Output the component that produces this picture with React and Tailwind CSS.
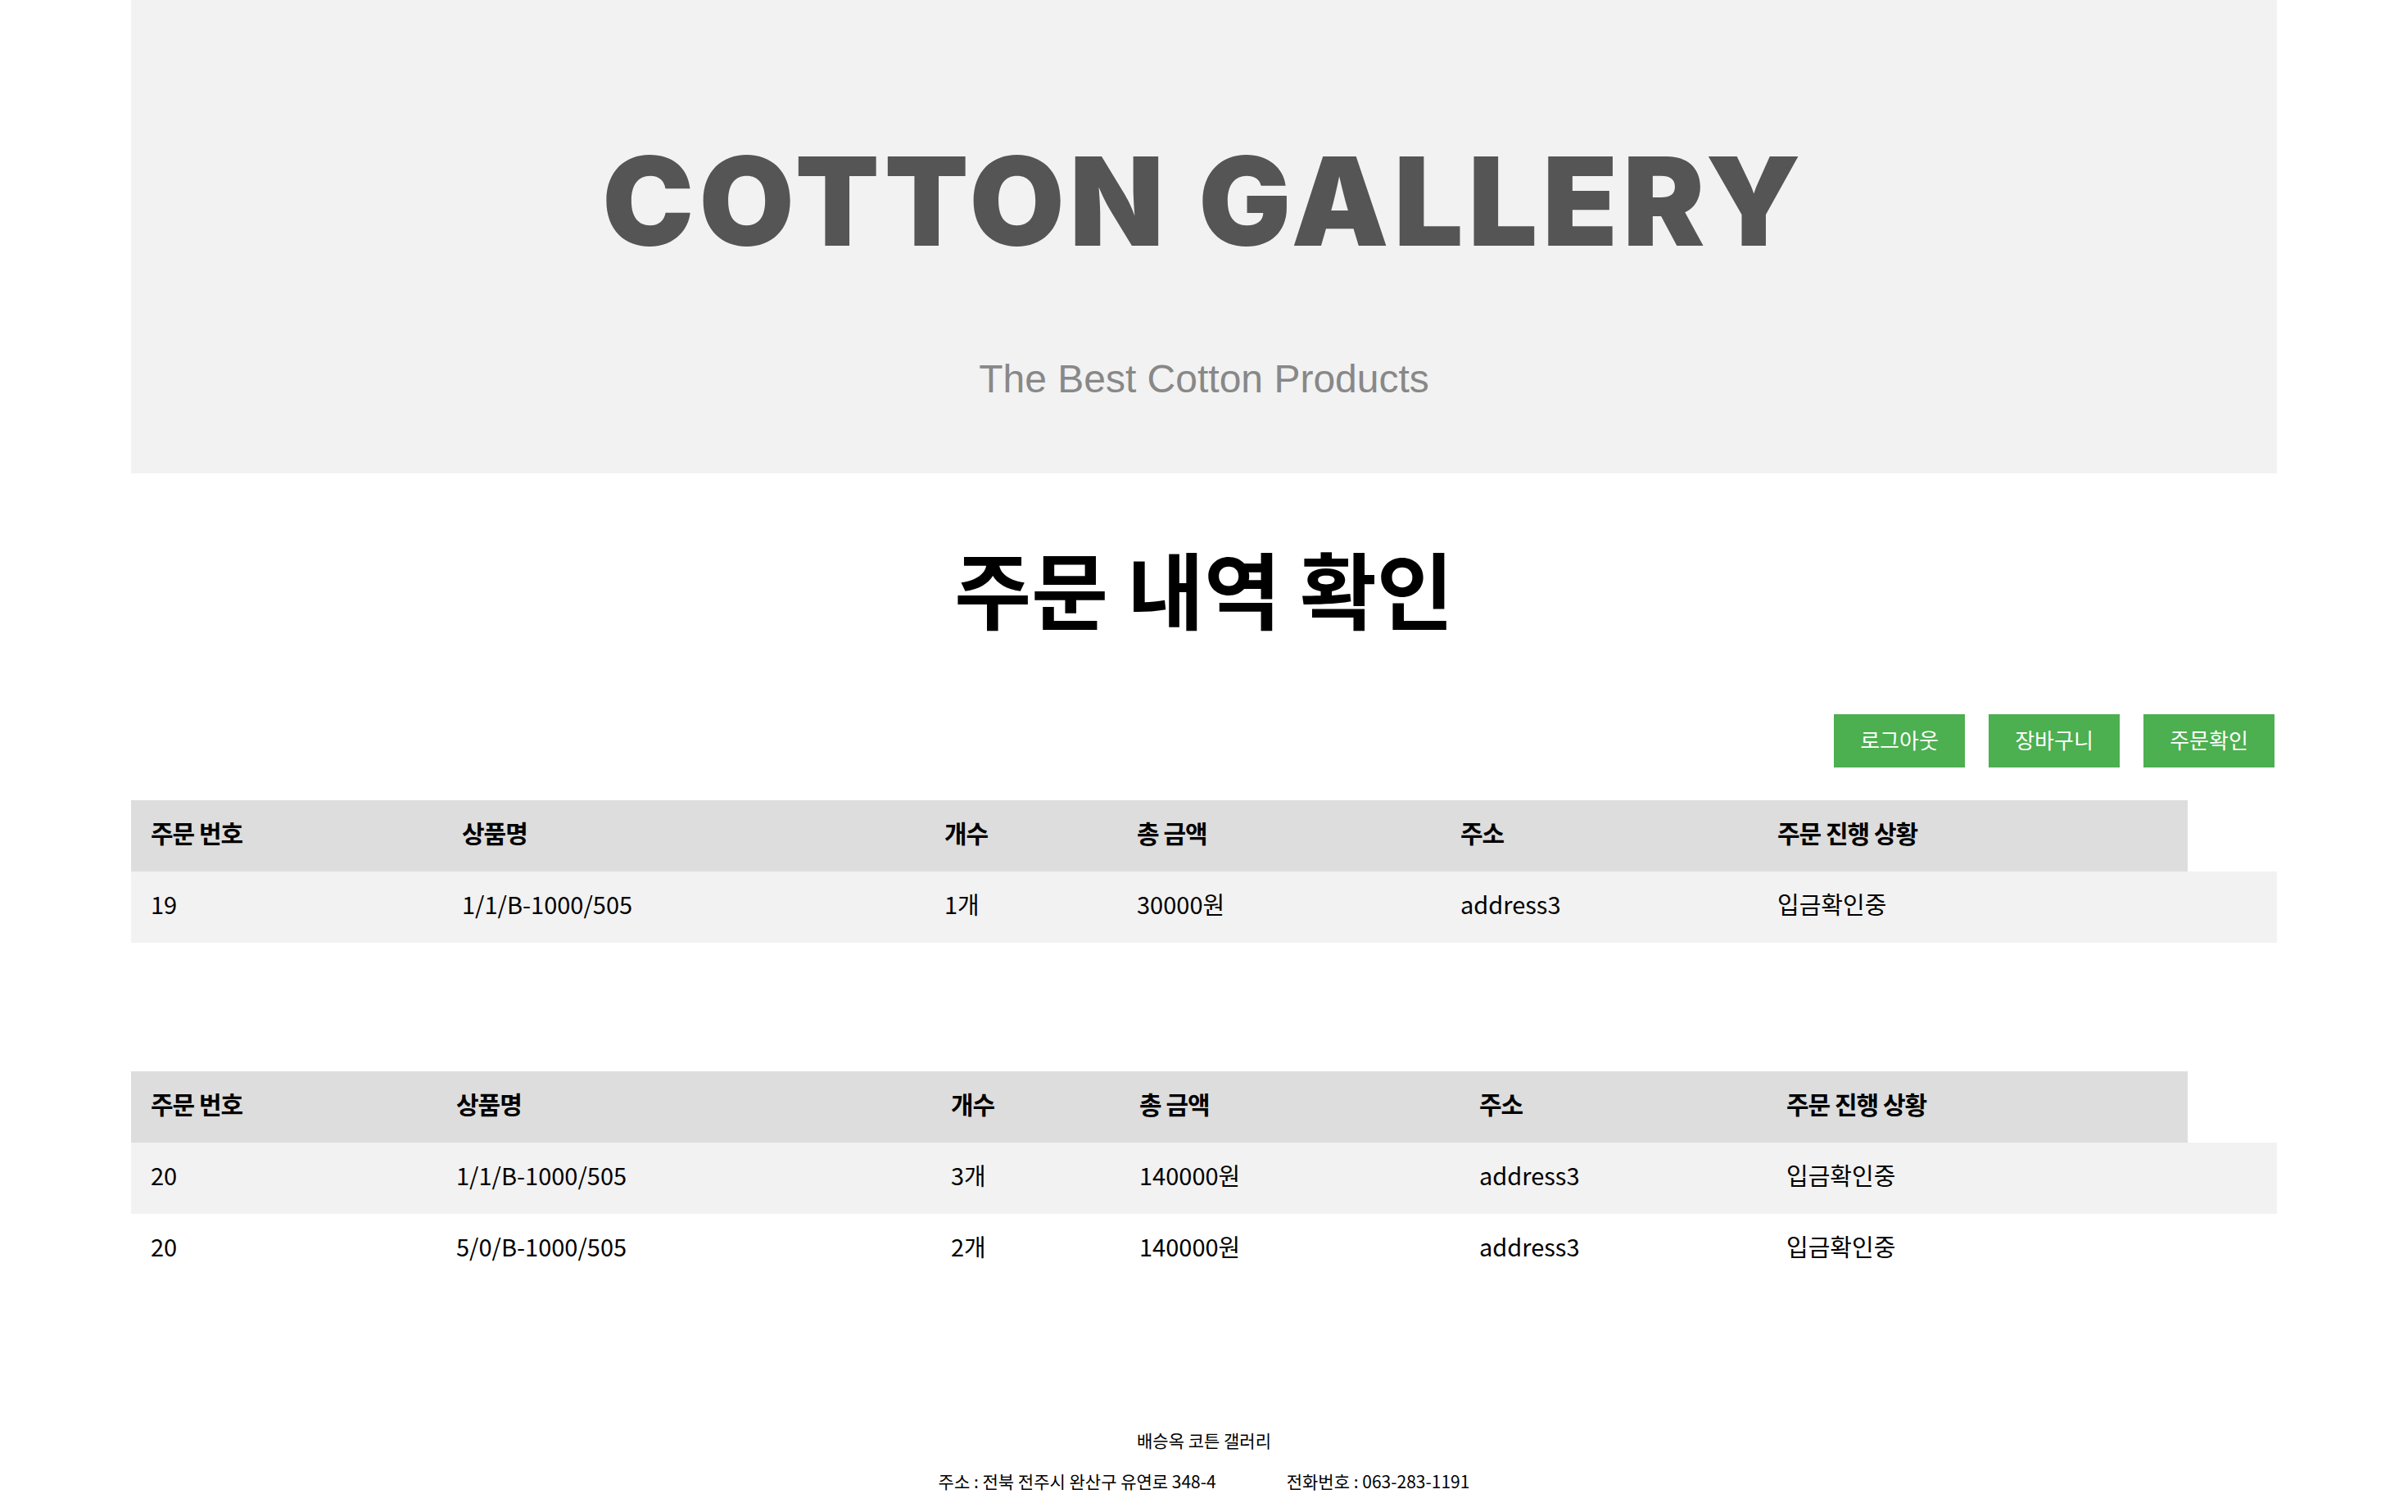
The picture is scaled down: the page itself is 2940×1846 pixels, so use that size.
import React from "react";

const t1 = {
  cols: ["w-[380px]", "w-[589px]", "w-[235px]", "w-[395px]", "w-[387px]", "w-[525px]", "w-[109px]"],
  rows: [["19", "1/1/B-1000/505", "1개", "30000원", "address3", "입금확인중"]],
};
const t2 = {
  cols: ["w-[373px]", "w-[604px]", "w-[230px]", "w-[415px]", "w-[375px]", "w-[514px]", "w-[109px]"],
  rows: [
    ["20", "1/1/B-1000/505", "3개", "140000원", "address3", "입금확인중"],
    ["20", "5/0/B-1000/505", "2개", "140000원", "address3", "입금확인중"],
  ],
};
const heads = ["주문 번호", "상품명", "개수", "총 금액", "주소", "주문 진행 상황"];

function OrderTable({ data, className }) {
  return (
    <table className={"w-full table-fixed border-collapse " + className}>
      <colgroup>
        {data.cols.map((c, i) => (
          <col key={i} className={c} />
        ))}
      </colgroup>
      <tbody>
        <tr>
          {heads.map((h) => (
            <th key={h} className="bg-[#dddddd] text-left font-bold text-[30px] tracking-[-1px] px-[24px] pt-0 pb-[8px] h-[87px] leading-[39px] align-middle">
              {h}
            </th>
          ))}
        </tr>
        {data.rows.map((r, i) => (
          <tr key={i} className={i % 2 === 0 ? "bg-[#f2f2f2]" : "bg-white"}>
            {r.map((c, j) => (
              <td key={j} className="px-[24px] pt-0 pb-[8px] h-[87px] leading-[39px] text-[29px] font-normal align-middle">
                {c}
              </td>
            ))}
            <td className="h-[87px]"></td>
          </tr>
        ))}
      </tbody>
    </table>
  );
}

export default function App() {
  return (
    <div className="min-h-[1846px] bg-white text-black font-['Noto_Sans_CJK_KR',sans-serif]">
      <header className="mx-[160px] h-[578px] bg-[#f2f2f2] flex flex-col items-center">
        <h1 className="pt-[171px] text-[150px] leading-none font-black tracking-[6px] text-[#555555] font-['Inter',sans-serif]">
          COTTON GALLERY
        </h1>
        <p className="mt-[118px] text-[48px] leading-none text-[#888888] font-['Liberation_Sans',sans-serif]">
          The Best Cotton Products
        </p>
      </header>
      <main className="mx-[160px]">
        <h2 className="mt-[88px] text-center text-[102px] leading-[102px] font-bold">주문 내역 확인</h2>
        <div className="mt-[104px] flex justify-end gap-[29px] pr-[3px]">
          {["로그아웃", "장바구니", "주문확인"].map((b) => (
            <button key={b} className="w-[160px] h-[65px] pb-[4px] bg-[#4caf50] text-white text-[26px] flex items-center justify-center">
              {b}
            </button>
          ))}
        </div>
        <OrderTable data={t1} className="mt-[40px]" />
        <OrderTable data={t2} className="mt-[157px]" />
      </main>
      <footer className="mt-[174px] text-center text-[21px] leading-[30px]">
        <p>배승옥 코튼 갤러리</p>
        <p className="mt-[20px] flex justify-center gap-[86px]">
          <span>주소 : 전북 전주시 완산구 유연로 348-4</span>
          <span>전화번호 : 063-283-1191</span>
        </p>
      </footer>
    </div>
  );
}
